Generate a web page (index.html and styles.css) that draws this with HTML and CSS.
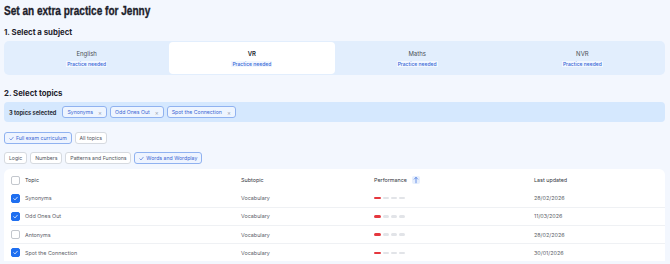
FILE: index.html
```html
<!DOCTYPE html>
<html lang="en">
<head>
<meta charset="utf-8">
<title>Set an extra practice</title>
<link rel="stylesheet" href="styles.css">
</head>
<body>
<main class="page">
  <h1 class="title">Set an extra practice for Jenny</h1>

  <h2 class="section-title">1. Select a subject</h2>
  <div class="subjects">
    <div class="subject"><span class="subject-name">English</span><span class="badge">Practice needed</span></div>
    <div class="subject active"><span class="subject-name strong">VR</span><span class="badge">Practice needed</span></div>
    <div class="subject"><span class="subject-name">Maths</span><span class="badge">Practice needed</span></div>
    <div class="subject"><span class="subject-name">NVR</span><span class="badge">Practice needed</span></div>
  </div>

  <h2 class="section-title second">2. Select topics</h2>
  <div class="selected-bar">
    <span class="selected-count">3 topics selected</span>
    <span class="tag">Synonyms <span class="tag-x">×</span></span>
    <span class="tag">Odd Ones Out <span class="tag-x">×</span></span>
    <span class="tag">Spot the Connection <span class="tag-x">×</span></span>
  </div>

  <div class="filter-row first">
    <span class="chip on"><svg class="chip-check" viewBox="0 0 10 10"><path d="M1.5 5.5 L4 8 L8.5 2.5" fill="none" stroke="currentColor" stroke-width="1.2" stroke-linecap="round" stroke-linejoin="round"/></svg>Full exam curriculum</span>
    <span class="chip">All topics</span>
  </div>
  <div class="filter-row">
    <span class="chip">Logic</span>
    <span class="chip">Numbers</span>
    <span class="chip">Patterns and Functions</span>
    <span class="chip on"><svg class="chip-check" viewBox="0 0 10 10"><path d="M1.5 5.5 L4 8 L8.5 2.5" fill="none" stroke="currentColor" stroke-width="1.2" stroke-linecap="round" stroke-linejoin="round"/></svg>Words and Wordplay</span>
  </div>

  <div class="table-card">
    <div class="trow head">
      <span class="cb"></span>
      <span>Topic</span>
      <span>Subtopic</span>
      <span class="perf-head">Performance <span class="sort"><svg viewBox="0 0 8 8"><path d="M4 6.8 V1.4 M2.3 3.1 L4 1.4 L5.7 3.1" fill="none" stroke="currentColor" stroke-width="0.8" stroke-linecap="round" stroke-linejoin="round"/></svg></span></span>
      <span>Last updated</span>
    </div>
    <div class="trow">
      <span class="cb checked"><svg viewBox="0 0 10 10"><path d="M2.5 5.2 L4.3 7 L7.6 3.2" fill="none" stroke="#fff" stroke-width="1.1" stroke-linecap="round" stroke-linejoin="round"/></svg></span>
      <span>Synonyms</span>
      <span>Vocabulary</span>
      <span class="bars"><i class="bar red"></i><i class="bar"></i><i class="bar"></i><i class="bar"></i></span>
      <span>28/02/2026</span>
    </div>
    <div class="trow">
      <span class="cb checked"><svg viewBox="0 0 10 10"><path d="M2.5 5.2 L4.3 7 L7.6 3.2" fill="none" stroke="#fff" stroke-width="1.1" stroke-linecap="round" stroke-linejoin="round"/></svg></span>
      <span>Odd Ones Out</span>
      <span>Vocabulary</span>
      <span class="bars"><i class="bar red"></i><i class="bar"></i><i class="bar"></i><i class="bar"></i></span>
      <span>11/03/2026</span>
    </div>
    <div class="trow">
      <span class="cb"></span>
      <span>Antonyms</span>
      <span>Vocabulary</span>
      <span class="bars"><i class="bar red"></i><i class="bar"></i><i class="bar"></i><i class="bar"></i></span>
      <span>28/02/2026</span>
    </div>
    <div class="trow">
      <span class="cb checked"><svg viewBox="0 0 10 10"><path d="M2.5 5.2 L4.3 7 L7.6 3.2" fill="none" stroke="#fff" stroke-width="1.1" stroke-linecap="round" stroke-linejoin="round"/></svg></span>
      <span>Spot the Connection</span>
      <span>Vocabulary</span>
      <span class="bars"><i class="bar red"></i><i class="bar"></i><i class="bar"></i><i class="bar"></i></span>
      <span>30/01/2026</span>
    </div>
  </div>
</main>
</body>
</html>
```

FILE: styles.css
```css
* { box-sizing: border-box; }

html, body {
  margin: 0;
  padding: 0;
  background: #f3f7fe;
  font-family: Inter, "Noto Sans", sans-serif;
  color: #2b2f36;
  height: 264px;
  overflow: hidden;
}

.page {
  padding: 2px 5px 0 4px;
}

.title {
  margin: 0;
  font-family: "Liberation Sans", Arial, sans-serif;
  font-weight: 700;
  font-size: 13.4px;
  line-height: 18px;
  color: #1c212b;
  -webkit-text-stroke: 0.35px #1c212b;
  transform: scaleX(0.75);
  transform-origin: left center;
  white-space: nowrap;
}

.section-title {
  margin: 7px 0 0;
  font-size: 7.8px;
  line-height: 10px;
  font-weight: 700;
  color: #1f242c;
}

.section-title.second {
  margin-top: 13px;
}

.subjects {
  margin-top: 4px;
  height: 34px;
  background: #e2eefd;
  border-radius: 5px;
  display: grid;
  grid-template-columns: repeat(4, 1fr);
  padding: 1px 0;
}

.subject {
  display: flex;
  flex-direction: column;
  align-items: center;
  justify-content: center;
  gap: 4px;
  border-radius: 4px;
}

.subject.active {
  background: #ffffff;
}

.subject-name {
  font-size: 6px;
  line-height: 7px;
  color: #4a4e55;
}

.subject-name.strong {
  font-weight: 600;
  color: #24282f;
}

.badge {
  font-size: 5px;
  line-height: 6px;
  color: #3566d6;
  background: #f2f7ff;
  padding: 0 1px;
  font-weight: 500;
}

.selected-bar {
  margin-top: 4px;
  height: 20px;
  background: #d5e8fe;
  border-radius: 4px;
  display: flex;
  align-items: center;
  padding-left: 5px;
  gap: 3px;
}

.selected-count {
  font-size: 5.7px;
  font-weight: 700;
  color: #2a2f37;
  margin-right: 3px;
}

.tag {
  height: 12px;
  display: inline-flex;
  align-items: center;
  gap: 5px;
  padding: 0 4px;
  font-size: 5.2px;
  color: #3a66d2;
  background: #eef5ff;
  border: 0.8px solid #90b2f0;
  border-radius: 3px;
}

.tag-x {
  color: #9aa3b0;
  font-size: 6px;
}

.filter-row {
  display: flex;
  gap: 3px;
  margin-top: 8px;
}

.filter-row.first {
  margin-top: 10px;
}

.chip {
  height: 12px;
  display: inline-flex;
  align-items: center;
  gap: 2px;
  padding: 0 3.9px;
  font-size: 5.2px;
  color: #51565e;
  background: #ffffff;
  border: 0.8px solid #d6dae0;
  border-radius: 3px;
}

.chip.on {
  color: #3a66d2;
  background: #eef4ff;
  border-color: #90b2f0;
}

.chip-check {
  width: 5px;
  height: 5px;
}

.table-card {
  margin-top: 5px;
  background: #ffffff;
  border-radius: 6px 6px 0 0;
  padding: 2px 0 0 7px;
}

.trow {
  display: grid;
  grid-template-columns: 14px 216px 133px 160px 1fr;
  align-items: center;
  height: 18.3px;
  font-size: 5.4px;
  color: #5c6169;
  border-bottom: 0.6px solid #eff1f4;
}

.trow.head {
  height: 18.5px;
  color: #34383f;
  border-bottom: none;
}

.trow:last-child {
  border-bottom: none;
  height: 17px;
}

.cb {
  width: 9px;
  height: 9px;
  border: 0.8px solid #c3c7cd;
  border-radius: 2px;
  background: #fff;
  display: flex;
}

.cb.checked {
  background: #1f6ff0;
  border-color: #1f6ff0;
}

.cb svg {
  width: 100%;
  height: 100%;
}

.perf-head {
  display: flex;
  align-items: center;
  gap: 5px;
}

.sort {
  width: 8px;
  height: 8px;
  background: #e7effd;
  border-radius: 2px;
  color: #4b7be0;
  display: flex;
}

.sort svg {
  width: 100%;
  height: 100%;
}

.bars {
  display: flex;
  gap: 2px;
}

.bar {
  display: block;
  width: 6px;
  height: 2.6px;
  border-radius: 2px;
  background: #e2e4e8;
}

.bar.red {
  width: 6.5px;
  background: #e5373e;
}
```
